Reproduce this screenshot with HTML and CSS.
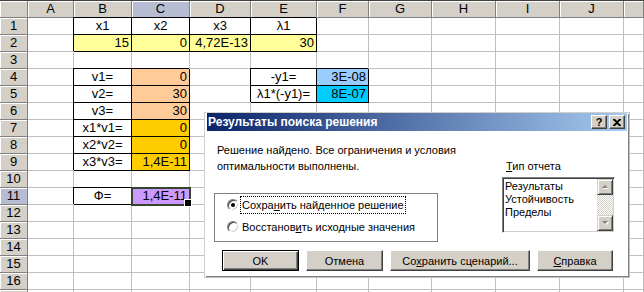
FILE: index.html
```html
<!DOCTYPE html>
<html lang="ru">
<head>
    <meta charset="UTF-8">
    <title>Поиск решения</title>
    <link rel="stylesheet" href="styles.css">
</head>
<body>
<div class="sheet">
    <div class="hd"></div><div class="hd">A</div><div class="hd">B</div><div class="hd on">C</div><div class="hd">D</div><div class="hd">E</div><div class="hd">F</div><div class="hd">G</div><div class="hd">H</div><div class="hd">I</div><div class="hd">J</div><div class="hd"></div>

    <div class="hd">1</div><div></div><div class="bx lbl">x1</div><div class="bx lbl">x2</div><div class="bx lbl">x3</div><div class="bx lbl">λ1</div><div></div><div></div><div></div><div></div><div></div><div></div>
    <div class="hd">2</div><div></div><div class="bx num yel">15</div><div class="bx num yel">0</div><div class="bx num yel">4,72E-13</div><div class="bx num yel">30</div><div></div><div></div><div></div><div></div><div></div><div></div>
    <div class="hd">3</div><div></div><div></div><div></div><div></div><div></div><div></div><div></div><div></div><div></div><div></div><div></div>
    <div class="hd">4</div><div></div><div class="bx lbl">v1=</div><div class="bx num pea">0</div><div></div><div class="bx lbl">-y1=</div><div class="bx num lb">3E-08</div><div></div><div></div><div></div><div></div><div></div>
    <div class="hd">5</div><div></div><div class="bx lbl">v2=</div><div class="bx num pea">30</div><div></div><div class="bx lbl">λ1*(-y1)=</div><div class="bx num cy">8E-07</div><div></div><div></div><div></div><div></div><div></div>
    <div class="hd">6</div><div></div><div class="bx lbl">v3=</div><div class="bx num pea">30</div><div></div><div></div><div></div><div></div><div></div><div></div><div></div><div></div>
    <div class="hd">7</div><div></div><div class="bx lbl">x1*v1=</div><div class="bx num gold">0</div><div></div><div></div><div></div><div></div><div></div><div></div><div></div><div></div>
    <div class="hd">8</div><div></div><div class="bx lbl">x2*v2=</div><div class="bx num gold">0</div><div></div><div></div><div></div><div></div><div></div><div></div><div></div><div></div>
    <div class="hd">9</div><div></div><div class="bx lbl">x3*v3=</div><div class="bx num gold">1,4E-11</div><div></div><div></div><div></div><div></div><div></div><div></div><div></div><div></div>
    <div class="hd">10</div><div></div><div></div><div></div><div></div><div></div><div></div><div></div><div></div><div></div><div></div><div></div>
    <div class="hd on">11</div><div></div><div class="bx lbl">Ф=</div><div class="bx num lav sel">1,4E-11</div><div></div><div></div><div></div><div></div><div></div><div></div><div></div><div></div>
    <div class="hd">12</div><div></div><div></div><div></div><div></div><div></div><div></div><div></div><div></div><div></div><div></div><div></div>
    <div class="hd">13</div><div></div><div></div><div></div><div></div><div></div><div></div><div></div><div></div><div></div><div></div><div></div>
    <div class="hd">14</div><div></div><div></div><div></div><div></div><div></div><div></div><div></div><div></div><div></div><div></div><div></div>
    <div class="hd">15</div><div></div><div></div><div></div><div></div><div></div><div></div><div></div><div></div><div></div><div></div><div></div>
    <div class="hd">16</div><div></div><div></div><div></div><div></div><div></div><div></div><div></div><div></div><div></div><div></div><div></div>
    <div class="hd"></div><div></div><div></div><div></div><div></div><div></div><div></div><div></div><div></div><div></div><div></div><div></div>

    <div class="dlg">
        <div class="cap">
            <span>Результаты поиска решения</span>
            <div class="cap-btns">
                <div class="cb help">?</div>
                <div class="cb">
                    <svg width="8" height="7" viewBox="0 0 8 7"><path d="M0 0h2l2 2 2-2h2v1L5 3.5 8 6v1H6L4 5 2 7H0V6l3-2.5L0 1z" fill="#000"/></svg>
                </div>
            </div>
        </div>
        <div class="dmain">
            <div class="dleft">
                <p class="msg">Решение найдено. Все ограничения и условия<br>оптимальности выполнены.</p>
                <div class="grp">
                    <div class="opt"><span class="radio on"></span><span class="olbl focus">Сохра<u>н</u>ить найденное решение</span></div>
                    <div class="opt"><span class="radio"></span><span class="olbl">Восстанов<u>и</u>ть исходные значения</span></div>
                </div>
            </div>
            <div class="dright">
                <div class="rlbl"><u>Т</u>ип отчета</div>
                <div class="lst">
                    <div class="items">
                        <div>Результаты</div>
                        <div>Устойчивость</div>
                        <div>Пределы</div>
                    </div>
                    <div class="sb">
                        <div class="sbtn"><svg width="7" height="5" viewBox="0 0 7 5"><path d="M1 4h6L4 1z" fill="#fff"/><path d="M0 3h6L3 0z" fill="#808080"/></svg></div>
                        <div class="track"></div>
                        <div class="sbtn"><svg width="7" height="5" viewBox="0 0 7 5"><path d="M1 1h6L4 4z" fill="#fff"/><path d="M0 0h6L3 3z" fill="#808080"/></svg></div>
                    </div>
                </div>
            </div>
        </div>
        <div class="btns">
            <div class="btn def">OK</div>
            <div class="btn">Отмена</div>
            <div class="btn wide">Со<u>х</u>ранить сценарий...</div>
            <div class="btn"><u>С</u>правка</div>
        </div>
    </div>
</div>
</body>
</html>
```

FILE: styles.css
```css
* {
    margin: 0;
    padding: 0;
    box-sizing: border-box;
}

body {
    width: 644px;
    height: 292px;
    overflow: hidden;
    background: #fff;
    font-family: "Liberation Sans", Arial, sans-serif;
}

/* sheet */
.sheet {
    position: relative;
    display: grid;
    grid-template-columns: 28px 46px 58px 58px 61px 66px 52px 63px 64px 64px 64px 1fr;
    grid-template-rows: 17px repeat(17, 17px);
    height: 292px;
    overflow: hidden;
    border-top: 1px solid #404040;
    font-size: 13px;
    color: #000;
}

.sheet > div {
    border-right: 1px solid #c0c0c0;
    border-bottom: 1px solid #c0c0c0;
    line-height: 16px;
    padding: 0 2px;
    white-space: nowrap;
    background: #fff;
}

.sheet > .hd {
    background: #d4d0c8;
    border-color: #808080;
    box-shadow: inset 1px 1px 0 #fff;
    text-align: center;
}

.sheet > .hd.on {
    background: #b6bdd2;
}

.sheet > .bx {
    border-color: #000;
    box-shadow: -1px -1px 0 #000;
}

.sheet > .lbl {
    text-align: center;
}

.sheet > .num {
    text-align: right;
}

.sheet > .yel { background: #ffff99; }
.sheet > .pea { background: #ffcc99; }
.sheet > .gold { background: #ffcc00; }
.sheet > .lb { background: #99ccff; }
.sheet > .cy { background: #00ccff; }
.sheet > .lav { background: #cc99ff; }

.sheet > .sel {
    position: relative;
    outline: 2px solid #34452f;
    outline-offset: -1px;
}

.sheet > .sel::after {
    content: "";
    position: absolute;
    right: -3px;
    bottom: -3px;
    width: 6px;
    height: 6px;
    background: #000;
    border: 1px solid #fff;
}

/* dialog */
.dlg {
    position: absolute;
    left: 204px;
    top: 111px;
    width: 426px;
    height: 166px;
    background: #d4d0c8;
    border: 1px solid;
    border-color: #d4d0c8 #404040 #404040 #d4d0c8;
    box-shadow: inset 1px 1px 0 #fff, inset -1px -1px 0 #808080;
    padding: 2px;
    font-family: "Liberation Sans", Tahoma, sans-serif;
    font-size: 11px;
    line-height: 14px;
    color: #000;
}

.cap {
    height: 18px;
    display: flex;
    align-items: center;
    justify-content: space-between;
    padding: 0 2px 0 1px;
    background: linear-gradient(to right, #0a246a, #a6caf0);
    color: #fff;
    font-weight: bold;
    font-size: 12px;
}

.cap-btns {
    display: flex;
    gap: 2px;
}

.cb {
    width: 16px;
    height: 14px;
    display: flex;
    align-items: center;
    justify-content: center;
    background: #d4d0c8;
    border: 1px solid;
    border-color: #fff #404040 #404040 #fff;
    box-shadow: inset -1px -1px 0 #808080;
    color: #000;
    font-weight: bold;
    font-size: 11px;
}

.dmain {
    display: flex;
    padding-left: 7px;
}

.dleft {
    width: 224px;
}

.msg {
    margin: 11px 0 0 3px;
    white-space: nowrap;
}

.grp {
    margin-top: 19px;
    height: 49px;
    border: 1px solid #808080;
    box-shadow: 1px 1px 0 #fff, inset 1px 1px 0 #fff;
    padding: 3px 0 0 12px;
    display: flex;
    flex-direction: column;
    gap: 6px;
}

.opt {
    display: flex;
    align-items: center;
    height: 16px;
}

.radio {
    width: 12px;
    height: 12px;
    border-radius: 50%;
    background: #fff;
    border: 1px solid;
    border-color: #808080 #fff #fff #808080;
    box-shadow: inset 1px 1px 0 #404040, inset -1px -1px 0 #d4d0c8;
    display: flex;
    align-items: center;
    justify-content: center;
}

.radio.on::after {
    content: "";
    width: 4px;
    height: 4px;
    border-radius: 50%;
    background: #000;
}

.olbl {
    margin-left: 1px;
    padding: 0 1px;
    border: 1px dotted transparent;
    white-space: nowrap;
}

.olbl.focus {
    border-color: #000;
}

.dright {
    margin-left: 64px;
    width: 113px;
}

.rlbl {
    margin: 27px 0 0 4px;
}

.lst {
    margin-top: 3px;
    height: 56px;
    display: flex;
    background: #fff;
    border: 1px solid;
    border-color: #808080 #fff #fff #808080;
    box-shadow: inset 1px 1px 0 #404040, inset -1px -1px 0 #d4d0c8;
    padding: 1px;
}

.items {
    flex: 1;
    padding: 1px 0 0 1px;
    line-height: 13px;
}

.sb {
    width: 16px;
    display: flex;
    flex-direction: column;
}

.sbtn {
    height: 16px;
    display: flex;
    align-items: center;
    justify-content: center;
    background: #d4d0c8;
    border: 1px solid;
    border-color: #d4d0c8 #404040 #404040 #d4d0c8;
    box-shadow: inset 1px 1px 0 #fff, inset -1px -1px 0 #808080;
}

.track {
    flex: 1;
    background: repeating-conic-gradient(#fff 0 25%, #d4d0c8 0 50%) 0 0 / 2px 2px;
}

.btns {
    display: flex;
    gap: 7px;
    margin-top: 8px;
    padding-left: 15px;
}

.btn {
    width: 77px;
    height: 21px;
    display: flex;
    align-items: center;
    justify-content: center;
    background: #d4d0c8;
    border: 1px solid;
    border-color: #fff #404040 #404040 #fff;
    box-shadow: inset -1px -1px 0 #808080;
    white-space: nowrap;
}

.btn.def {
    border-color: #000;
    box-shadow: inset 1px 1px 0 #fff, inset -1px -1px 0 #404040, inset -2px -2px 0 #808080;
}

.btn.wide {
    width: 140px;
}

.btn:last-child {
    width: 76px;
}
```
